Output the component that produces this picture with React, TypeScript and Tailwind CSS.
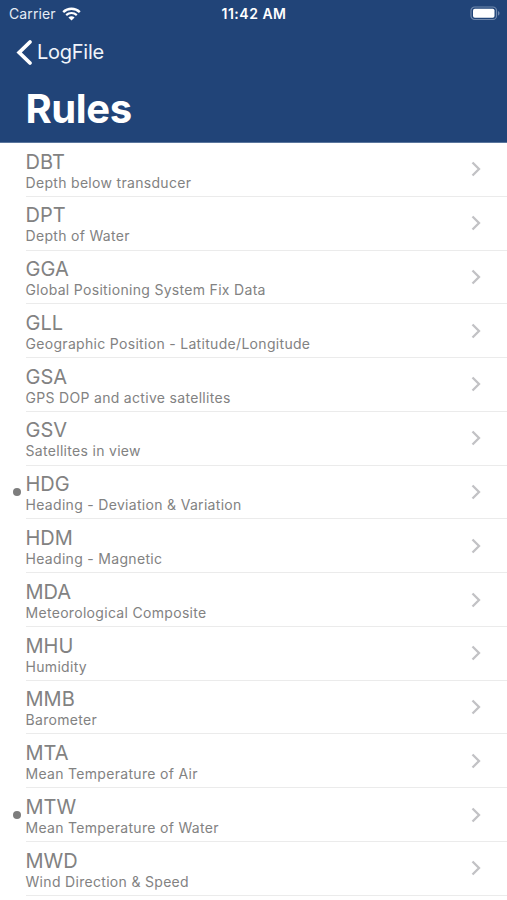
import React from 'react';

type Rule = {
	code: string;
	description: string;
	active?: boolean;
};

const rules: Rule[] = [
	{ code: 'DBT', description: 'Depth below transducer' },
	{ code: 'DPT', description: 'Depth of Water' },
	{ code: 'GGA', description: 'Global Positioning System Fix Data' },
	{ code: 'GLL', description: 'Geographic Position - Latitude/Longitude' },
	{ code: 'GSA', description: 'GPS DOP and active satellites' },
	{ code: 'GSV', description: 'Satellites in view' },
	{ code: 'HDG', description: 'Heading - Deviation & Variation', active: true },
	{ code: 'HDM', description: 'Heading - Magnetic' },
	{ code: 'MDA', description: 'Meteorological Composite' },
	{ code: 'MHU', description: 'Humidity' },
	{ code: 'MMB', description: 'Barometer' },
	{ code: 'MTA', description: 'Mean Temperature of Air' },
	{ code: 'MTW', description: 'Mean Temperature of Water', active: true },
	{ code: 'MWD', description: 'Wind Direction & Speed' },
];

const WifiIcon = () => (
	<svg className="ml-[6px] h-[14px] w-[19px]" viewBox="0 0 19 14" fill="none">
		<path d="M1.2 5.1C5.8.6 13.2.6 17.8 5.1" stroke="white" strokeWidth="2.4" />
		<path d="M4.2 8.1C7.2 5.3 11.8 5.3 14.8 8.1" stroke="white" strokeWidth="2.2" />
		<path d="M6.4 10.4C8.2 8.8 10.8 8.8 12.6 10.4L9.5 13.5Z" fill="white" />
	</svg>
);

const BatteryIcon = () => (
	<svg className="h-[15px] w-[31px]" viewBox="0 0 31 15" fill="none">
		<rect x="2" y="1" width="25.5" height="12.5" rx="3.6" stroke="#7189ad" strokeWidth="1.2" />
		<rect x="4" y="2.8" width="21.5" height="9" rx="1.8" fill="white" />
		<path d="M29 5V9.6C31 8.8 31 5.8 29 5Z" fill="#7189ad" />
	</svg>
);

const StatusBar = () => (
	<div className="grid h-[27px] grid-cols-3 items-center pl-[9px] pr-[7px] text-white">
		<div className="flex items-center text-[14px] leading-none tracking-[0.1px] text-[#e6ecf5]">
			Carrier
			<WifiIcon />
		</div>
		<div className="pr-px text-center text-[14px] font-semibold leading-none tracking-[0.5px]">
			11:42 AM
		</div>
		<div className="flex justify-end">
			<BatteryIcon />
		</div>
	</div>
);

const RuleRow = ({ rule }: { rule: Rule }) => (
	<li className="flex h-[53.77px]">
		<div className="flex w-[25.5px] items-center pl-[13px]">
			{rule.active && <span className="h-[8px] w-[8px] rounded-full bg-[#7d7d7d]" />}
		</div>
		<div className="flex flex-1 items-center justify-between border-b border-[#ebebeb] pr-[26px] text-[#828282]">
			<div className="pt-[3.5px]">
				<div className="text-[20px] leading-[22px]">{rule.code}</div>
				<div className="text-[14px] leading-[19px] tracking-[0.31px]">
					{rule.description}
				</div>
			</div>
			<svg className="h-[16px] w-[10px]" viewBox="0 0 10 16" fill="none">
				<path d="M1.5 1.5L8 8L1.5 14.5" stroke="#c2c2c5" strokeWidth="2.3" />
			</svg>
		</div>
	</li>
);

const App = () => {
	return (
		<div className="h-[900px] w-full overflow-hidden bg-white font-['Inter',sans-serif]">
			<header className="h-[143px] border-b border-[#5a769d] bg-[#214478] text-white">
				<StatusBar />
				<div className="flex h-[50px] items-center pl-[16px]">
					<svg className="h-[27px] w-[17px]" viewBox="0 0 17 27" fill="none">
						<path d="M14 3L3.2 13.5L14 24" stroke="white" strokeWidth="3.8" strokeLinecap="round" />
					</svg>
					<span className="ml-[4px] text-[20px] leading-none tracking-[-0.25px] text-[#f0f4fa]">
						LogFile
					</span>
				</div>
				<h1 className="pl-[25.5px] pt-[8px] text-[40px] font-bold leading-[48px] tracking-[-0.4px]">
					Rules
				</h1>
			</header>
			<ul>
				{rules.map((rule) => (
					<RuleRow key={rule.code} rule={rule} />
				))}
			</ul>
		</div>
	);
};

export default App;
